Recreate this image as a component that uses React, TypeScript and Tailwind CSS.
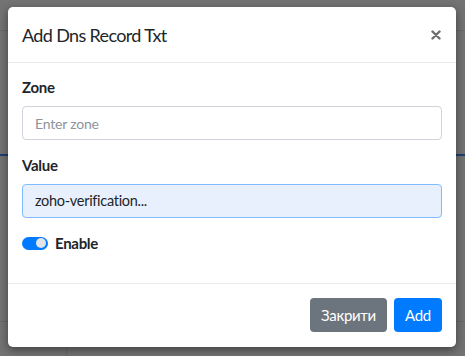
import React from "react";

export default function App() {
  const font = { fontFamily: "Lato, 'Liberation Sans', sans-serif" };
  return (
    <div className="relative w-[465px] h-[356px] overflow-hidden bg-[#737373]" style={font}>
      {/* page behind the backdrop */}
      <div className="flex flex-col w-full h-full">
        <div className="h-[31px] border-b border-[#6a6a6a]" />
        <div className="h-[123px]" />
        <div className="h-[2px] bg-[#1d3f70]" />
        <div className="h-[166px] border-b border-[#6a6a6a]" />
        <div className="flex-1 flex">
          <div className="w-[67px] border-r border-[#6a6a6a]" />
        </div>
      </div>

      {/* modal overlay */}
      <div className="absolute inset-0 pt-[7px] pl-[8px]">
        <div className="w-[448px] bg-white rounded-[5px] shadow-[0_3px_10px_rgba(0,0,0,0.45)] flex flex-col">
          <div className="h-[56px] flex items-center justify-between pl-[14px] pr-[15px] border-b border-[#e9ecef]">
            <h5 className="text-[18px] leading-[24px] tracking-[-0.65px] text-[#212529] font-normal">Add Dns Record Txt</h5>
            <svg width="10" height="10" viewBox="0 0 10 10">
              <path d="M1.5 1.5 L8.5 8.5 M8.5 1.5 L1.5 8.5" stroke="#6e6e6e" strokeWidth="2.4" strokeLinecap="round" />
            </svg>
          </div>
          <div className="pl-[14px] pr-[14px] pt-[12px] pb-[28px] flex flex-col">
            <label className="h-[24px] leading-[24px] text-[15px] tracking-[-0.3px] font-bold text-[#212529] mb-[7px]">Zone</label>
            <div className="h-[34px] border border-[#ced4da] rounded-[4px] flex items-center px-[12px] mb-[13px]">
              <span className="text-[14px] tracking-[-0.2px] text-[#8d939a]">Enter zone</span>
            </div>
            <label className="h-[24px] leading-[24px] text-[15px] tracking-[-0.3px] font-bold text-[#212529] mb-[7px]">Value</label>
            <div className="h-[34px] border border-[#80bdff] bg-[#e8f0fe] rounded-[4px] flex items-center px-[12px] mb-[13px]">
              <span className="text-[14.5px] tracking-[-0.3px] text-[#212529]">zoho-verification...</span>
            </div>
            <div className="h-[24px] flex items-center gap-[7px]">
              <div className="w-[26px] h-[13px] rounded-full bg-[#007bff] flex items-center justify-end pr-[2px]">
                <div className="w-[10px] h-[10px] rounded-full bg-[#e1e4e8]" />
              </div>
              <span className="text-[15px] tracking-[-0.3px] font-bold text-[#212529]">Enable</span>
            </div>
          </div>
          <div className="border-t border-[#e9ecef] h-[64px] flex items-center justify-end gap-[7px] pr-[14px] pb-[1px]">
            <div className="h-[34px] w-[77px] rounded-[4px] bg-[#6c757d] text-white text-[15px] tracking-[-0.3px] flex items-center justify-center">Закрити</div>
            <div className="h-[34px] w-[48px] rounded-[4px] bg-[#007bff] text-white text-[15px] tracking-[-0.3px] flex items-center justify-center">Add</div>
          </div>
        </div>
      </div>
    </div>
  );
}
